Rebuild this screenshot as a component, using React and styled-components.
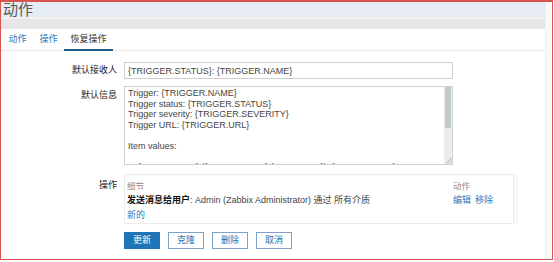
import React from "react";
import styled, { createGlobalStyle } from "styled-components";

const Global = createGlobalStyle`
  html, body { margin: 0; padding: 0; background: #fff; }
  body { font-family: "Liberation Sans", "Noto Sans CJK SC", sans-serif; }
  * { box-sizing: border-box; }
`;

const Frame = styled.div`
  width: 553px;
  height: 260px;
  border: 1px solid #d9534f;
  border-top-width: 2px;
  display: flex;
  overflow: hidden;
  background: #fff;
`;

const Main = styled.div`
  flex: 1;
  display: flex;
  flex-direction: column;
  min-width: 0;
`;

const ScrollStrip = styled.div`
  width: 7px;
  background: #fafafa;
  border-left: 1px solid #eeeeee;
`;

const Header = styled.div`
  height: 27px;
  background: linear-gradient(
    to bottom,
    #e7ecf3 0,
    #e7ecf3 15px,
    #eef0f2 15px,
    #eef0f2 17px,
    #e6e6e6 17px,
    #e6e6e6 100%
  );
  padding-left: 2px;
`;

const Title = styled.h1`
  margin: 0;
  font-size: 15px;
  line-height: 15px;
  font-weight: normal;
  color: #5a5a5a;
`;

const TabBar = styled.div`
  display: flex;
  height: 22px;
  border-bottom: 1px solid #ebebeb;
  padding-left: 1px;
`;

const Tab = styled.div`
  display: flex;
  align-items: center;
  padding: 0 6.5px;
  margin-bottom: -1px;
  font-size: 9px;
  line-height: 11px;
  color: ${(p) => (p.$active ? "#333" : "#2a7cc0")};
  border-bottom: 2px solid ${(p) => (p.$active ? "#1f5c87" : "transparent")};
`;

const Form = styled.div`
  display: flex;
  flex-direction: column;
  padding-top: 11px;
`;

const Row = styled.div`
  display: grid;
  grid-template-columns: 116px auto;
  column-gap: 7px;
  margin-top: ${(p) => p.$gap || 0}px;
`;

const Label = styled.div`
  text-align: right;
  font-size: 9px;
  line-height: 11px;
  color: #222;
  padding-top: ${(p) => p.$top || 0}px;
`;

const Input = styled.div`
  width: 329px;
  height: 17px;
  border: 1px solid #cfcfcf;
  padding: 0 3px;
  display: flex;
  align-items: center;
  font-size: 9px;
  color: #444;
  white-space: nowrap;
`;

const TextBox = styled.div`
  width: 329px;
  height: 79px;
  border: 1px solid #cfcfcf;
  display: flex;
`;

const TextContent = styled.div`
  flex: 1;
  overflow: hidden;
  padding: 1px 3px 0;
  font-size: 9px;
  line-height: 10.6px;
  color: #444;
  white-space: pre;
`;

const ScrollBar = styled.div`
  width: 8px;
  background: #ececec;
  display: flex;
  flex-direction: column;
`;

const Thumb = styled.div`
  height: 41px;
  background: #c2cbcb;
  margin: 0 1px;
`;

const Grip = styled.div`
  margin-top: auto;
  height: 8px;
  display: flex;
  align-items: flex-end;
  justify-content: flex-end;
`;

const OpsBox = styled.div`
  width: 390px;
  height: 50px;
  border: 1px solid #ececec;
  box-shadow: 4px 0 0 #f8f8f8;
  padding: 2px 2px;
  display: grid;
  grid-template-columns: 326px 1fr;
  grid-auto-rows: 15px;
  align-items: center;
  font-size: 9px;
`;

const ColHead = styled.div`
  font-size: 8.5px;
  color: #8a8a8a;
`;

const Cell = styled.div`
  color: #444;
  white-space: nowrap;
`;

const Strong = styled.b`
  color: #111;
  font-weight: bold;
`;

const Link = styled.span`
  color: #2a7cc0;
  margin-right: ${(p) => p.$mr || 0}px;
`;

const Buttons = styled.div`
  display: flex;
  gap: 8px;
`;

const Button = styled.button`
  width: 36px;
  height: 17px;
  padding: 0;
  font-family: inherit;
  font-size: 9px;
  line-height: 11px;
  border: 1px solid ${(p) => (p.$primary ? "#1f75b8" : "#7fa3c7")};
  background: ${(p) => (p.$primary ? "#1f75b8" : "#fff")};
  color: ${(p) => (p.$primary ? "#fff" : "#2a6fae")};
  border-radius: 0;
`;

const message = `Trigger: {TRIGGER.NAME}
Trigger status: {TRIGGER.STATUS}
Trigger severity: {TRIGGER.SEVERITY}
Trigger URL: {TRIGGER.URL}

Item values:

1. {ITEM.NAME1} ({HOST.NAME1}:{ITEM.KEY1}): {ITEM.VALUE1}`;

export default function App() {
  return (
    <>
      <Global />
      <Frame>
        <Main>
          <Header>
            <Title>动作</Title>
          </Header>
          <TabBar>
            <Tab>动作</Tab>
            <Tab>操作</Tab>
            <Tab $active>恢复操作</Tab>
          </TabBar>
          <Form>
            <Row>
              <Label $top={3}>默认接收人</Label>
              <Input>{"{TRIGGER.STATUS}: {TRIGGER.NAME}"}</Input>
            </Row>
            <Row $gap={7}>
              <Label $top={4}>默认信息</Label>
              <TextBox>
                <TextContent>{message}</TextContent>
                <ScrollBar>
                  <Thumb />
                  <Grip>
                    <svg width="7" height="7" viewBox="0 0 7 7">
                      <path d="M6.5 1 L1 6.5 M6.5 4 L4 6.5" stroke="#999" strokeWidth="0.8" fill="none" />
                    </svg>
                  </Grip>
                </ScrollBar>
              </TextBox>
            </Row>
            <Row $gap={9}>
              <Label $top={5.5}>操作</Label>
              <OpsBox>
                <ColHead>细节</ColHead>
                <ColHead>动作</ColHead>
                <Cell>
                  <Strong>发送消息给用户</Strong>: Admin (Zabbix Administrator) 通过 所有介质
                </Cell>
                <Cell>
                  <Link $mr={4}>编辑</Link>
                  <Link>移除</Link>
                </Cell>
                <Cell>
                  <Link>新的</Link>
                </Cell>
              </OpsBox>
            </Row>
            <Row $gap={8}>
              <div />
              <Buttons>
                <Button $primary>更新</Button>
                <Button>克隆</Button>
                <Button>删除</Button>
                <Button>取消</Button>
              </Buttons>
            </Row>
          </Form>
        </Main>
        <ScrollStrip />
      </Frame>
    </>
  );
}
